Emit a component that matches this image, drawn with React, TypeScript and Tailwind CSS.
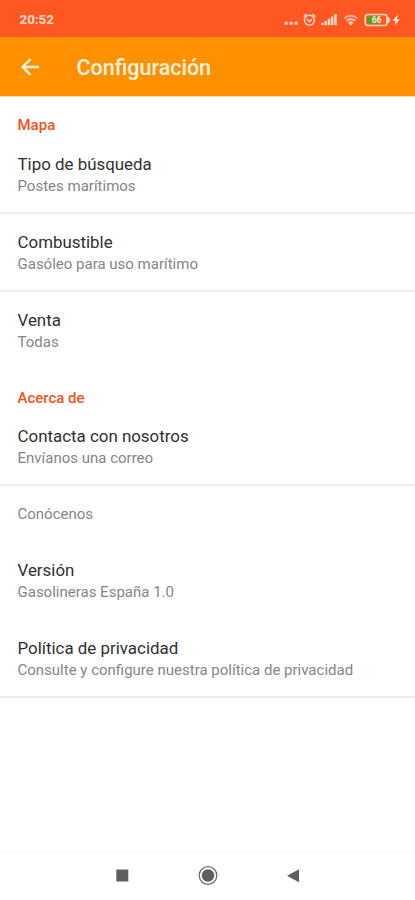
interface Preference {
    title?: string;
    summary: string;
    divider?: boolean;
}

interface Section {
    label: string;
    items: Preference[];
}

const sections: Section[] = [
    {
        label: "Mapa",
        items: [
            { title: "Tipo de búsqueda", summary: "Postes marítimos", divider: true },
            { title: "Combustible", summary: "Gasóleo para uso marítimo", divider: true },
            { title: "Venta", summary: "Todas" },
        ],
    },
    {
        label: "Acerca de",
        items: [
            { title: "Contacta con nosotros", summary: "Envíanos una correo", divider: true },
            { summary: "Conócenos" },
            { title: "Versión", summary: "Gasolineras España 1.0" },
            { title: "Política de privacidad", summary: "Consulte y configure nuestra política de privacidad", divider: true },
        ],
    },
];

function StatusIcons() {
    return (
        <svg width="120" height="16" viewBox="0 0 120 16" fill="none" stroke="#ffd9ca">
            {/* More */}
            <g fill="#ffd9ca" stroke="none">
                <rect x="1.5" y="9.8" width="3.2" height="3" rx="0.6" />
                <rect x="6.5" y="9.8" width="3.2" height="3" rx="0.6" />
                <rect x="11.5" y="9.8" width="3.2" height="3" rx="0.6" />
            </g>
            {/* Alarm */}
            <circle cx="26.5" cy="8.3" r="5" strokeWidth="1.5" />
            <path d="M20.6 4.6 23.6 2M32.4 4.6 29.4 2M24 7.2l2.5 2.2 2.6-2.2" strokeWidth="1.5" />
            {/* Signal */}
            <g fill="#ffd9ca" stroke="none">
                <rect x="38.3" y="10.8" width="2.5" height="2.4" />
                <rect x="41.5" y="9" width="2.5" height="4.2" />
                <rect x="44.7" y="6.8" width="2.5" height="6.4" />
                <rect x="47.9" y="4.5" width="2.5" height="8.7" />
                <rect x="51.3" y="2" width="2.5" height="11.2" />
            </g>
            {/* Wifi */}
            <path d="M61.3 6.2a9.5 9.5 0 0 1 13 0" strokeWidth="2" opacity="0.7" />
            <path d="M63.5 8.8a6.3 6.3 0 0 1 8.6 0" strokeWidth="1.9" />
            <path d="m65 10.6 2.8 3 2.8-3a4.2 4.2 0 0 0-5.6 0Z" fill="#ffd9ca" stroke="none" />
            {/* Battery */}
            <rect x="82.3" y="2.5" width="21.6" height="11" rx="2.6" strokeWidth="1.6" />
            <path d="M104.8 5c2.2 1 2.2 5 0 6Z" fill="#ffd9ca" strokeWidth="0.9" />
            <rect x="84.2" y="4.4" width="12.4" height="7.2" rx="0.8" fill="#4ea51c" stroke="none" />
            <text x="93.6" y="11.2" textAnchor="middle" fontSize="8.5" fontWeight="700" fill="#ffe9df" stroke="none">66</text>
            {/* Charging */}
            <path d="m115 2.6-5.4 6.2h3.1l-1.2 4.8 5.3-6.3h-3Z" fill="#fff0ea" stroke="none" />
        </svg>
    );
}

function PreferenceRow({ title, summary, divider }: Preference) {
    return (
        <div className={`flex flex-col justify-center border-b-2 pl-[17.5px] ${title ? "h-[78px] pt-0.5" : "h-14 pt-0.5"} ${divider ? "border-[#ebebeb]" : "border-transparent"}`}>
            {title && <span className="text-[16.9px] leading-[22px] text-[#303030]">{title}</span>}
            <span className="text-[15px] leading-[22px] text-[#858585]">{summary}</span>
        </div>
    );
}

export default function App() {
    return (
        <div className="flex h-[900px] w-[415px] flex-col overflow-hidden bg-white font-['Roboto',sans-serif]">
            <div className="flex h-[37px] shrink-0 items-center justify-between bg-[#ff5722] pl-[19.5px] pr-[12px] pt-0.5">
                <span className="text-[13.3px] font-bold text-[#ffd9ca]">20:52</span>
                <StatusIcons />
            </div>

            <header className="flex h-[60px] shrink-0 items-center border-b border-[#f1d9bd] bg-[#ff9100] pl-[21px]">
                <svg width="19" height="19" viewBox="0 0 19 19" fill="none" stroke="#fff3e2" strokeWidth="2.3">
                    <path d="M18 10H2.2M9.5 2.1 1.6 10l7.9 7.9" />
                </svg>
                <h1 className="ml-[36.5px] pt-[4px] text-[21.5px] font-medium text-[#fff3e2]">Configuración</h1>
            </header>

            <main className="flex-1">
                {sections.map((section) => (
                    <section key={section.label}>
                        <h2 className="flex h-[38.5px] items-center pl-[17.5px] pt-[18px] text-[15px] font-medium text-[#f4511e]">{section.label}</h2>
                        {section.items.map((item) => (
                            <PreferenceRow key={item.summary} {...item} />
                        ))}
                    </section>
                ))}
            </main>

            {/* Navigation bar */}
            <nav className="flex h-[49px] shrink-0 items-center justify-center border-t border-[#f7f7f7]">
                <svg width="186" height="22" viewBox="0 0 186 22" fill="#5e5e5e">
                    <rect x="1.3" y="4.5" width="12" height="12" />
                    <circle cx="93" cy="10.5" r="8.8" fill="none" stroke="#6b6b6b" strokeWidth="1.3" />
                    <circle cx="93" cy="10.5" r="6.2" />
                    <path d="M172 10.7 184 4.3v13Z" />
                </svg>
            </nav>
        </div>
    );
}
